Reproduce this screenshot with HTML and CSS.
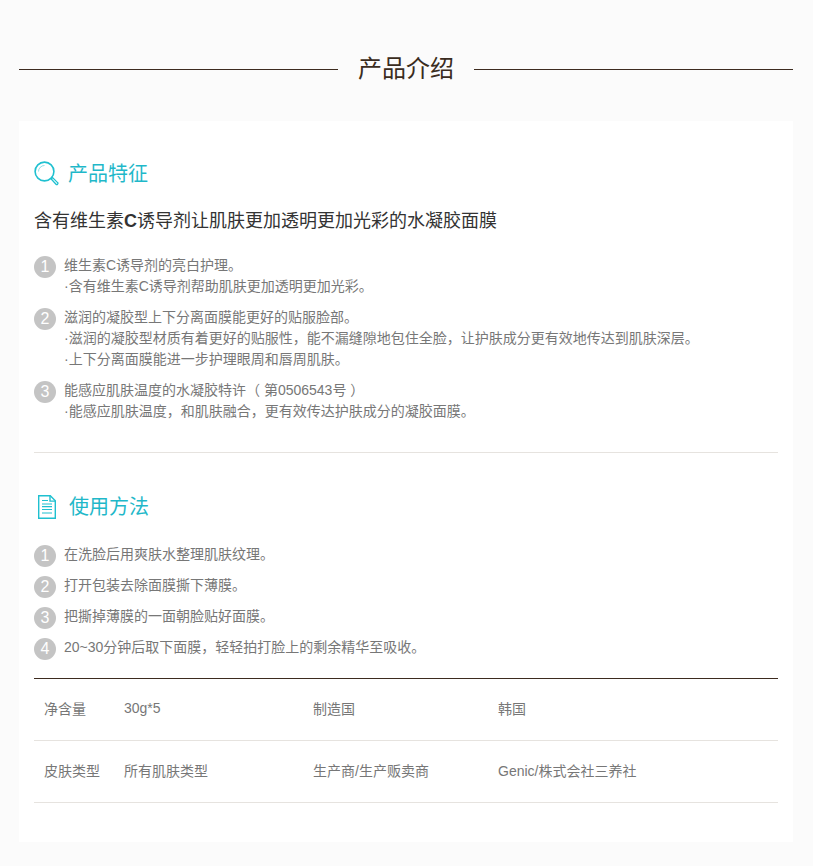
FILE: index.html
```html
<!DOCTYPE html>
<html lang="zh-CN">
<head>
<meta charset="utf-8">
<title>产品介绍</title>
<link rel="stylesheet" href="styles.css">
</head>
<body>
<main class="page">
  <h1 class="title"><span>产品介绍</span></h1>
  <div class="card">
    <section class="features">
      <h2 class="sec-head">
        <svg class="sec-icon" width="26" height="26" viewBox="0 0 26 26" fill="none" stroke="#1fc0d0"><circle cx="10.5" cy="10.5" r="9.4" stroke-width="1.6"/><path d="M4.5 10.5A6 6 0 0 1 10.5 4.5" stroke-width="1" opacity=".5"/><path d="M17.2 18l1.4-1.4 5 5a1 1 0 0 1 0 1.5l-.1.1a1 1 0 0 1-1.5 0z" stroke-width="1.3"/></svg>
        <span>产品特征</span>
      </h2>
      <p class="lead">含有维生素<b>C</b>诱导剂让肌肤更加透明更加光彩的水凝胶面膜</p>
      <ol class="steps">
        <li class="step"><span class="num">1</span><div>维生素C诱导剂的亮白护理。<br>·含有维生素C诱导剂帮助肌肤更加透明更加光彩。</div></li>
        <li class="step"><span class="num">2</span><div>滋润的凝胶型上下分离面膜能更好的贴服脸部。<br>·滋润的凝胶型材质有着更好的贴服性，能不漏缝隙地包住全脸，让护肤成分更有效地传达到肌肤深层。<br>·上下分离面膜能进一步护理眼周和唇周肌肤。</div></li>
        <li class="step"><span class="num">3</span><div>能感应肌肤温度的水凝胶特许（ 第0506543号 ）<br>·能感应肌肤温度，和肌肤融合，更有效传达护肤成分的凝胶面膜。</div></li>
      </ol>
    </section>
    <section class="usage">
      <h2 class="sec-head wide">
        <svg class="sec-icon" width="26" height="26" viewBox="0 0 26 26" fill="none" stroke="#1fc0d0" stroke-width="1.4"><path d="M4.7 1.7h11.6l5 5v17.6H4.7z"/><path d="M16 1.7v5.4h5.3"/><path d="M8 6.5h6M8 10h10M8 12.7h10M8 15.5h10M8 19h10" stroke-width="1.2"/></svg>
        <span>使用方法</span>
      </h2>
      <ol class="steps tight">
        <li class="step"><span class="num">1</span><div>在洗脸后用爽肤水整理肌肤纹理。</div></li>
        <li class="step"><span class="num">2</span><div>打开包装去除面膜撕下薄膜。</div></li>
        <li class="step"><span class="num">3</span><div>把撕掉薄膜的一面朝脸贴好面膜。</div></li>
        <li class="step"><span class="num">4</span><div>20~30分钟后取下面膜，轻轻拍打脸上的剩余精华至吸收。</div></li>
      </ol>
    </section>
    <dl class="specs">
      <div class="spec-row">
        <dt>净含量</dt><dd>30g*5</dd><dt>制造国</dt><dd>韩国</dd>
      </div>
      <div class="spec-row">
        <dt>皮肤类型</dt><dd>所有肌肤类型</dd><dt>生产商/生产贩卖商</dt><dd>Genic/株式会社三养社</dd>
      </div>
    </dl>
  </div>
</main>
</body>
</html>
```

FILE: styles.css
```css
* { box-sizing: border-box; }
html, body { margin: 0; padding: 0; }
body {
  background: #fbfbfb;
  color: #777;
  font-family: "Liberation Sans", "Noto Sans CJK SC", sans-serif;
  font-size: 14px;
}
.page { padding: 53px 20px 20px 19px; }
.title {
  display: flex;
  align-items: center;
  gap: 20px;
  margin: 0;
  height: 32px;
  font-size: 24px;
  font-weight: 400;
  line-height: 32px;
  color: #3a2c20;
}
.title::before, .title::after {
  content: "";
  flex: 1;
  height: 1px;
  background: #3d2b1f;
}
.card {
  margin-top: 36px;
  height: 721px;
  padding: 0 15px;
  background: #fff;
}
.features {
  padding-top: 39px;
  height: 332px;
  border-bottom: 1px solid #e6e3df;
}
.sec-head {
  display: flex;
  align-items: center;
  gap: 8px;
  margin: 0;
  height: 28px;
  font-size: 20px;
  font-weight: 400;
  line-height: 28px;
  color: #1fb8c9;
}
.sec-head.wide { gap: 9px; }
.sec-icon { flex: none; }
.lead {
  margin: 20px 0 0;
  font-size: 18px;
  line-height: 26px;
  color: #333;
}
.lead b { font-weight: 700; }
.steps {
  list-style: none;
  margin: 21px 0 0;
  padding: 0;
}
.step {
  display: flex;
  gap: 8px;
  line-height: 21px;
  margin-bottom: 10px;
}
.num {
  flex: none;
  width: 22px;
  height: 22px;
  margin-top: 1px;
  border-radius: 50%;
  background: #c4c4c4;
  color: #fff;
  font-size: 16px;
  line-height: 22px;
  text-align: center;
}
.usage { padding-top: 40px; height: 225px; }
.steps.tight { margin-top: 23px; }
.steps.tight .step { margin-bottom: 8px; }
.specs { margin: 0; border-top: 1px solid #3d2b1f; }
.spec-row {
  display: grid;
  grid-template-columns: 80px 189px 185px 1fr;
  align-items: center;
  height: 62px;
  padding: 0 0 4px 10px;
  border-bottom: 1px solid #e6e3df;
}
.specs dt, .specs dd { margin: 0; font-weight: 400; }
```
